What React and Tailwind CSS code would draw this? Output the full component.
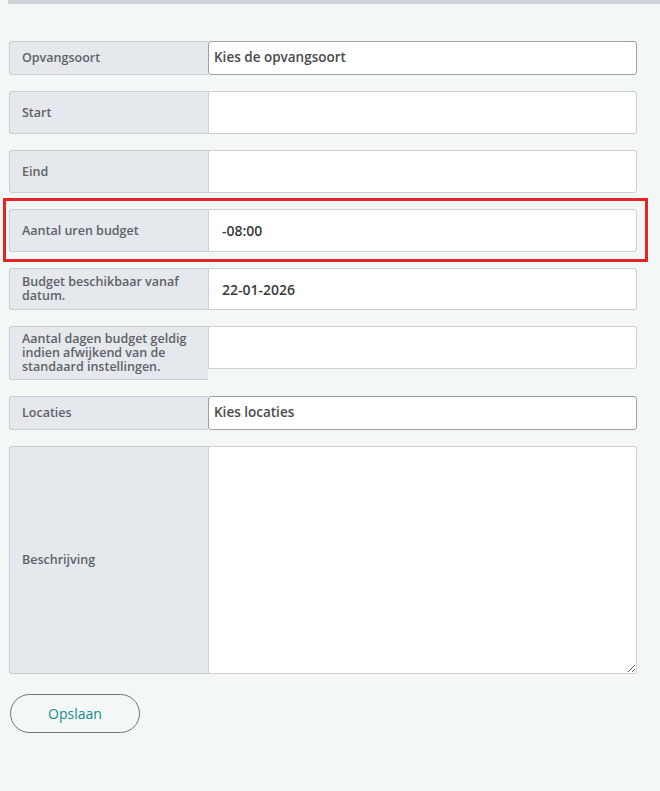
import { useState } from "react";

// rows of the budget form
const rows = [
  { id: "opvangsoort", label: "Opvangsoort", type: "select", placeholder: "Kies de opvangsoort" },
  { id: "start", label: "Start", type: "input", value: "", h: "h-[43px]" },
  { id: "eind", label: "Eind", type: "input", value: "", h: "h-[43px]" },
  { id: "uren", label: "Aantal uren budget", type: "input", value: "-08:00", h: "h-[43px]", highlight: true },
  { id: "vanaf", label: "Budget beschikbaar vanaf datum.", type: "input", value: "22-01-2026", h: "h-[42px]" },
  {
    id: "dagen",
    label: "Aantal dagen budget geldig indien afwijkend van de standaard instellingen.",
    type: "input",
    value: "",
    tall: true,
  },
  { id: "locaties", label: "Locaties", type: "select", placeholder: "Kies locaties" },
  { id: "beschrijving", label: "Beschrijving", type: "textarea" },
];

function Label({ children, className = "" }) {
  return (
    <div
      className={
        "w-[199px] shrink-0 flex items-center pl-[12px] pr-2 bg-[#e5e8ed] border border-r-0 border-[#cbced3] rounded-l-[3px] text-[12.5px] leading-[14px] font-semibold text-[#606267] " +
        className
      }
    >
      {children}
    </div>
  );
}

function Row({ row, formData, handleChange }) {
  if (row.type === "select") {
    return (
      <div className="flex h-[34px]">
        <Label>{row.label}</Label>
        <div className="flex-1 bg-white border border-[#9c9fa3] rounded-[3px] pl-[5px] pt-[6px] text-[13.5px] leading-[18px] font-semibold text-[#4a4a4a]">
          {row.placeholder}
        </div>
      </div>
    );
  }

  if (row.type === "textarea") {
    return (
      <div className="flex h-[228px]">
        <Label>{row.label}</Label>
        <textarea
          id={row.id}
          onChange={handleChange}
          className="flex-1 bg-white border border-[#cbced3] rounded-r-[3px] outline-none p-2 text-[14px]"
        />
      </div>
    );
  }

  return (
    <div className={"relative flex items-start " + (row.tall ? "" : row.h)}>
      <Label className={row.tall ? "min-h-[53px] py-[5px]" : "h-full py-[5px]"}>{row.label}</Label>
      <input
        id={row.id}
        type="text"
        value={formData[row.id] ?? row.value}
        onChange={handleChange}
        className={
          "flex-1 min-w-0 bg-white border border-[#cbced3] rounded-r-[3px] outline-none pl-[13px] text-[14px] font-semibold text-[#3a3a3a] " +
          (row.tall ? "h-[43px]" : "h-full")
        }
      />
      {/* red marker round the row that matters */}
      {row.highlight && (
        <div className="absolute top-[-11px] bottom-[-10px] left-[-6px] right-[-11px] border-[3px] border-[#e42525] pointer-events-none" />
      )}
    </div>
  );
}

export default function App() {
  const [formData, setFormData] = useState({});

  const handleChange = (e) => {
    setFormData({ ...formData, [e.target.id]: e.target.value });
  };

  return (
    <div
      className="min-h-[791px] bg-[#f3f8f6]"
      style={{ fontFamily: '"Open Sans", "Noto Sans", sans-serif' }}
    >
      <div className="h-[4px] ml-[8px] bg-[#cdd1d8]" />

      <form className="pt-[37px] pl-[9px] w-[637px] flex flex-col gap-[16px]">
        {rows.map((row) => (
          <Row key={row.id} row={row} formData={formData} handleChange={handleChange} />
        ))}

        <button
          type="button"
          className="mt-[4px] ml-[1px] w-[130px] h-[39px] rounded-full border border-[#6f7773] text-[14px] text-[#16898b] bg-transparent"
        >
          Opslaan
        </button>
      </form>
    </div>
  );
}
